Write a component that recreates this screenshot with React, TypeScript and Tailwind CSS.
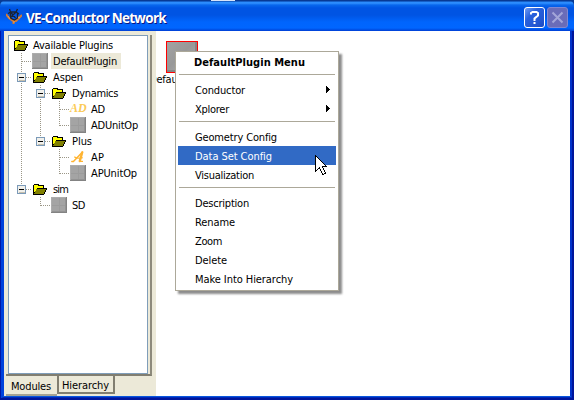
import React, { useLayoutEffect, useRef, useState } from "react";

/** Single line of text whose tracking is tuned so that it spans `width` pixels. */
function Label({ text, width, className = "" }: { text: string; width: number; className?: string }) {
  const ref = useRef<HTMLSpanElement>(null);
  const [spacing, setSpacing] = useState(0);
  useLayoutEffect(() => {
    if (!ref.current) return;
    const natural = ref.current.getBoundingClientRect().width - spacing * text.length;
    setSpacing((width - natural) / text.length);
  }, [text, width]);
  return (
    <span ref={ref} className={`inline-block whitespace-pre ${className}`} style={{ letterSpacing: spacing }}>
      {text}
    </span>
  );
}

type IconName = "folder" | "module" | "ad" | "ap";
type Guide = "none" | "pass" | "tee" | "elbow" | "box" | "boxEnd";
type Row = { text: string; width: number; icon: IconName; guides: Guide[]; selected?: boolean };

const rows: Row[] = [
  { text: "Available Plugins", width: 80, icon: "folder", guides: [] },
  { text: "DefaultPlugin", width: 64, icon: "module", guides: ["tee"], selected: true },
  { text: "Aspen", width: 30, icon: "folder", guides: ["box"] },
  { text: "Dynamics", width: 46, icon: "folder", guides: ["pass", "box"] },
  { text: "AD", width: 14, icon: "ad", guides: ["pass", "pass", "tee"] },
  { text: "ADUnitOp", width: 47, icon: "module", guides: ["pass", "pass", "elbow"] },
  { text: "Plus", width: 20, icon: "folder", guides: ["pass", "boxEnd"] },
  { text: "AP", width: 13, icon: "ap", guides: ["pass", "none", "tee"] },
  { text: "APUnitOp", width: 46, icon: "module", guides: ["pass", "none", "elbow"] },
  { text: "sim", width: 15, icon: "folder", guides: ["boxEnd"] },
  { text: "SD", width: 13, icon: "module", guides: ["none", "elbow"] },
];

function Module() {
  return (
    <svg width="16" height="16" viewBox="0 0 16 16" shapeRendering="crispEdges">
      <rect width="16" height="16" fill="#838383" />
      <rect width="15" height="15" fill="#adadad" />
      <rect x="1" y="1" width="14" height="14" fill="#a4a4a4" />
      <path d="M8 1h1v14H8zM1 8h14v1H1z" fill="#9c9c9c" />
      <path d="M14 1h1v14H1v-1h13z" fill="#939393" />
    </svg>
  );
}

function Folder() {
  return (
    <svg width="16" height="16" viewBox="0 0 16 16" shapeRendering="crispEdges">
      <path d="M1 13V4l1-1h4l1 1h5v3h3v1l-3 6H1z" fill="#000" />
      <path d="M2 11V4h4v1h5v2H5v1H4v2H3v1z" fill="#ff0" />
      <path d="M2 13v-1h1v-2h1V8h10v1h-1v2h-1v2z" fill="#808000" />
    </svg>
  );
}

function TreeIcon({ name }: { name: IconName }) {
  if (name === "folder") return <Folder />;
  if (name === "module") return <Module />;
  if (name === "ad")
    return (
      <span className="w-4 text-center font-['Liberation_Serif',serif] text-[12px] leading-[14px] font-bold italic text-[#fbcb58]">
        AD
      </span>
    );
  return (
    <svg width="16" height="16" viewBox="0 0 16 16" fill="none" stroke="#ffb432" strokeLinecap="round">
      <path d="M1.8 12.5h1.6L12.5 3" strokeWidth="1.5" />
      <path d="M12.2 3.5L9.8 12" strokeWidth="2.4" />
      <path d="M4.5 8q3 2 8 .8M9.5 12.4h3" strokeWidth="1.1" />
    </svg>
  );
}

function GuideCell({ kind }: { kind: Guide }) {
  const box = kind === "box" || kind === "boxEnd";
  const full = kind === "pass" || kind === "tee" || kind === "box";
  return (
    <svg width="19" height="16" viewBox="0 0 19 16" shapeRendering="crispEdges">
      {kind !== "none" && (
        <path d={full ? "M8.5 0v16" : "M8.5 0v9"} stroke="#9a9686" strokeDasharray="1 1" />
      )}
      {kind !== "none" && kind !== "pass" && (
        <path d="M9 8.5h10" stroke="#9a9686" strokeDasharray="1 1" />
      )}
      {box && (
        <>
          <rect x="4.5" y="4.5" width="8" height="8" fill="#f1f0eb" stroke="#7b9ab8" />
          <path d="M6 11.5h6" stroke="#c5bfae" />
          <path d="M6 8.5h5" stroke="#000" />
        </>
      )}
    </svg>
  );
}

function Tree() {
  return (
    <div className="h-[339px] w-[140px] border border-[#7f9db9] bg-white pt-px pl-1">
      {rows.map((r) => (
        <div key={r.text} className="flex h-4">
          {r.guides.map((g, i) => (
            <GuideCell key={i} kind={g} />
          ))}
          <div className="flex w-[19px] shrink-0">
            <TreeIcon name={r.icon} />
          </div>
          <div
            className={`h-4 pt-px leading-4 ${r.guides.length ? "pl-[2px]" : "pl-px"} ${
              r.selected ? "w-[70px] bg-[#ece9d8]" : ""
            }`}
          >
            <Label text={r.text} width={r.width} />
          </div>
        </div>
      ))}
    </div>
  );
}

function Sidebar() {
  return (
    <aside className="flex w-[152px] shrink-0 flex-col bg-[#ece9d8] pt-[4px] pl-[2px]">
      <div className="h-[341px] w-[146px] border-r-2 border-b-2 border-r-[#8d8a7c] border-b-[#817e70] pl-[2px]">
        <Tree />
      </div>
      <div className="flex items-start">
        <div className="h-[20px] w-[51px] border-b-2 border-[#a5a293] pl-[5px] leading-[22px]">
          <Label text="Modules" width={40} />
        </div>
        <div className="h-[18px] w-[58px] border-r-2 border-b-2 border-l-2 border-[#817e70] pl-[3px] leading-[19px]">
          <Label text="Hierarchy" width={47} />
        </div>
      </div>
    </aside>
  );
}

type Item = { text: string; width: number; submenu?: boolean; active?: boolean };
const groups: Item[][] = [
  [
    { text: "Conductor", width: 50, submenu: true },
    { text: "Xplorer", width: 34, submenu: true },
  ],
  [
    { text: "Geometry Config", width: 82 },
    { text: "Data Set Config", width: 77, active: true },
    { text: "Visualization", width: 59 },
  ],
  [
    { text: "Description", width: 54 },
    { text: "Rename", width: 40 },
    { text: "Zoom", width: 27 },
    { text: "Delete", width: 32 },
    { text: "Make Into Hierarchy", width: 98 },
  ],
];

function ContextMenu() {
  return (
    <div className="absolute top-[51px] left-[175px] h-[240px] w-[164px] border border-[#aca899] bg-white px-[2px] shadow-[3px_3px_2px_rgba(0,0,0,0.45)]">
      <div className="h-[19px] pt-px pl-[16px] leading-[20px] font-bold">
        <Label text="DefaultPlugin Menu" width={111} />
      </div>
      {groups.map((group, gi) => (
        <div key={gi}>
          <div className="h-[9px] px-px pt-[3px]">
            <div className="h-px bg-[#aca899]" />
          </div>
          {group.map((item) => (
            <div
              key={item.text}
              className={`flex h-[19px] items-center justify-between pr-[6px] pl-[17px] leading-[19px] ${
                item.active ? "bg-[#316ac5] text-white" : ""
              }`}
            >
              <div className="pt-[2px] leading-[17px]">
                <Label text={item.text} width={item.width} />
              </div>
              {item.submenu && (
                <svg width="4" height="7" viewBox="0 0 4 7" className="mb-px" shapeRendering="crispEdges">
                  <path d="M0 0h1v1h1v1h1v1h1v1H3v1H2v1H1v1H0z" />
                </svg>
              )}
            </div>
          ))}
        </div>
      ))}
    </div>
  );
}

function Pointer() {
  return (
    <svg className="absolute top-[155px] left-[315px]" width="13" height="21" viewBox="0 0 13 21" shapeRendering="crispEdges">
      <path d="M0.5 0.5V16.5L4.5 12.5L7.5 19.5L10.5 18.5L7.5 11.5H11.5Z" fill="#fff" stroke="#000" />
    </svg>
  );
}

function TitleBar() {
  return (
    <header className="flex h-[31px] shrink-0 bg-[linear-gradient(to_bottom,#073994_0px,#073994_1px,#2586fb_2px,#3292ff_3px,#0867ed_5px,#0054e3_8px,#0054e3_15px,#0065fd_22px,#0066ff_28px,#004ce0_30px,#003dd7_31px)] pl-[6px]">
      <svg className="mt-[8px] shrink-0" width="16" height="17" viewBox="0 0 16 17" fill="none">
        <path d="M0 6l3 4 4 3h3l3-3 3-3M7.500 12v4" stroke="#d07a35" strokeWidth="2" />
        <path d="M3.500 1l1 3 5 6M11.500 1L10 4l-6 6M2 5.500L5 4h5l3 2M4.500 5v5l4 2 3-2V5" stroke="#1b2330" strokeWidth="1.300" />
        <path d="M2 8l2 3M12 9l2 1M7 14h2" stroke="#f0a050" />
      </svg>
      <div className="ml-[4px] flex-1 font-['Open_Sans','Noto_Sans',sans-serif] text-[13.5px] leading-[36px] font-bold text-white [text-shadow:1px_1px_0_#0a1883]">
        <Label text="VE-Conductor Network" width={140} />
      </div>
      <div className="mt-[7px] mr-[6px] flex gap-[2px]">
        <div className="flex h-[21px] w-[21px] items-center justify-center rounded-[3px] border border-white bg-[linear-gradient(135deg,#6f9cf4,#2861dd_35%,#2358d3_70%,#1d4ac0)]">
          <svg width="11" height="15" viewBox="0 0 11 15" fill="none" stroke="#fff" strokeWidth="2">
            <path d="M2 4.500V3l1.500-1h4L9 3v2.500L5.500 8.500V11" />
            <path d="M5.500 12v2" />
          </svg>
        </div>
        <div className="flex h-[21px] w-[21px] items-center justify-center rounded-[3px] border border-[#8088d2] bg-[#6a6cb8]">
          <svg width="13" height="13" viewBox="0 0 13 13" stroke="#a3a6d8" strokeWidth="2">
            <path d="M1.500 1.500l10 10M11.500 1.500l-10 10" />
          </svg>
        </div>
      </div>
    </header>
  );
}

export default function App() {
  return (
    <div className="relative flex h-[400px] w-[574px] flex-col overflow-hidden bg-[#073994] font-['DejaVu_Sans_Condensed','DejaVu_Sans',sans-serif] text-[11px] text-black">
      <div className="flex h-full flex-col overflow-hidden rounded-t-[6px]">
        <TitleBar />
        <div className="flex h-[369px] border-r-4 border-b-4 border-l-4 border-[#0042dc] border-r-[#0032ca] border-b-[#0028b8]">
          <Sidebar />
          <main className="flex-1 overflow-hidden bg-white pt-[10px] pl-[10px]">
            <div className="h-[32px] w-[32px] border border-[#f00] bg-[linear-gradient(135deg,#a3a3a3,#989898_45%,#b0b0b0)] shadow-[inset_-2px_-2px_0_#858585]" />
            <div className="-ml-[17px] leading-[13px]">
              <Label text="DefaultPlugin" width={64} />
            </div>
          </main>
        </div>
      </div>
      <div className="absolute top-0 left-[211px] h-px w-[24px] bg-[#d8e4f8]" />
      <div className="absolute top-[31px] bottom-0 left-0 w-px bg-[#0018a8]" />
      <div className="absolute top-[31px] right-0 bottom-0 w-[2px] bg-[#00159b]" />
      <div className="absolute right-0 bottom-0 left-0 h-[2px] bg-[#00159b]" />
      <div className="absolute right-[3px] bottom-[3px] left-[3px] h-px bg-[#0855dd]" />
      <ContextMenu />
      <Pointer />
    </div>
  );
}
